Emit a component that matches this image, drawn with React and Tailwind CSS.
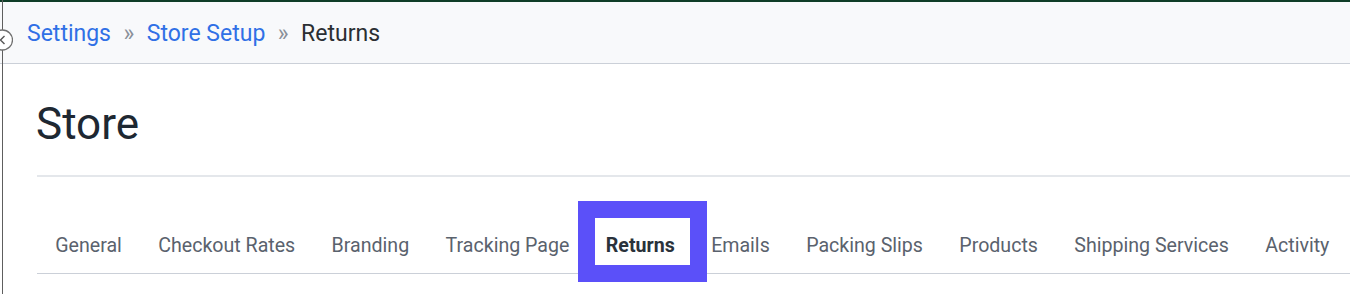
import React from "react";

const tabs = [
  "General",
  "Checkout Rates",
  "Branding",
  "Tracking Page",
  "Returns",
  "Emails",
  "Packing Slips",
  "Products",
  "Shipping Services",
  "Activity",
];

export default function App() {
  return (
    <div
      className="relative min-h-[294px] w-full overflow-hidden bg-white"
      style={{ fontFamily: "Roboto, 'Liberation Sans', sans-serif" }}
    >
      <div className="h-[2px] w-full bg-[#0f3d28]" />
      <header className="flex h-[62px] items-center border-b border-[#cbd0d8] bg-[#f8f9fb] pt-[2px] pl-[27px] text-[23px] leading-[28px]">
        <a className="text-[#3070e6]">Settings</a>
        <span className="mx-[12.5px] text-[#8a9099]">»</span>
        <a className="text-[#3070e6]">Store Setup</a>
        <span className="mx-[12.5px] text-[#8a9099]">»</span>
        <span className="text-[#2b2f33]">Returns</span>
      </header>

      <main className="pl-[37px]">
        <h1 className="mt-[35px] -ml-[1px] text-[44px] leading-[50px] font-normal text-[#1e2832]">
          Store
        </h1>
        <div className="mt-[26px] h-[2px] bg-[#e4e7eb]" />
        <nav className="flex border-b border-[#cbd0d8] pt-[57px]">
          {tabs.map((t) =>
            t === "Returns" ? (
              <div
                key={t}
                className="relative px-[18.2px] pb-[15px] text-[19.6px] leading-[24px] font-bold text-[#2a323b]"
              >
                {t}
                <span className="pointer-events-none absolute -top-[33px] -bottom-[9px] -left-[10px] -right-[13.8px] z-10 border-[17px] border-[#5b50f9]" />
              </div>
            ) : (
              <div
                key={t}
                className="px-[18.2px] pb-[15px] text-[19.6px] leading-[24px] whitespace-nowrap text-[#5a626d]"
              >
                {t}
              </div>
            )
          )}
        </nav>
      </main>

      <div className="absolute top-0 bottom-0 left-[2px] w-px bg-[#5e5e5e]" />
      <svg
        className="absolute left-[-8px] top-[29px]"
        width="21"
        height="22"
        viewBox="0 0 21 22"
      >
        <circle cx="10.5" cy="11" r="10" fill="#fff" stroke="#707070" strokeWidth="1.3" />
        <path d="M12.5 7 L8.5 11 L12.5 15" fill="none" stroke="#555" strokeWidth="1.4" />
      </svg>
    </div>
  );
}
